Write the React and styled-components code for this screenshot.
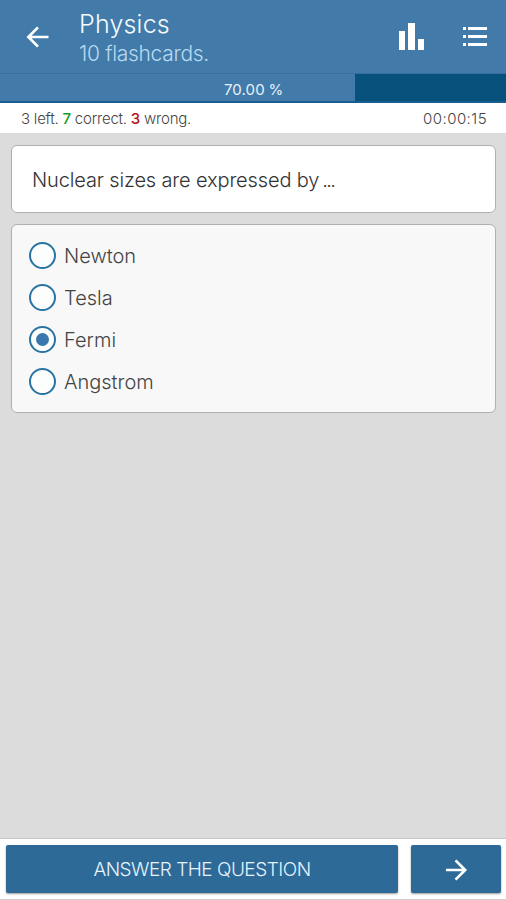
import React from "react";
import styled, { createGlobalStyle } from "styled-components";

const GlobalStyle = createGlobalStyle`
  * { box-sizing: border-box; }
  body { margin: 0; background: #dcdcdc; font-family: Inter, "Liberation Sans", sans-serif; font-weight: 300; }
`;

const Screen = styled.div`
  display: flex;
  flex-direction: column;
  height: 900px;
  background: #dcdcdc;
`;

const Toolbar = styled.header`
  display: flex;
  align-items: center;
  height: 74px;
  padding: 0 18px 0 26px;
  background: #427ba9;
  border-bottom: 1px solid #376e9c;
  color: #fff;
  svg { display: block; flex: none; }
`;

const Heading = styled.div`
  flex: 1;
  padding-left: 30px;
  margin-top: 5px;
`;

const Line = styled.div`
  white-space: nowrap;
  font-size: ${(p) => p.$size}px;
  line-height: ${(p) => p.$height}px;
  letter-spacing: ${(p) => p.$spacing || 0}px;
  color: ${(p) => p.$color};
`;

const QuestionText = styled(Line)`
  display: flex;
  gap: 3px;
`;

const Ellipsis = styled.span`
  letter-spacing: -1.6px;
`;

const Actions = styled.div`
  display: flex;
  align-items: center;
  gap: 37px;
`;

const Progress = styled.div`
  display: grid;
  grid-template-columns: 355px 1fr;
  height: 29px;
  border-bottom: 2px solid #185d90;
  background: #07527d;
`;

const ProgressFill = styled.div`
  display: flex;
  align-items: center;
  padding: 3px 0 0 224px;
  background: #427ba9;
  color: #e6f1fa;
  font-size: 15px;
  font-weight: 400;
  letter-spacing: 0.1px;
  word-spacing: -0.5px;
  white-space: nowrap;
`;

const Stats = styled.div`
  display: flex;
  justify-content: space-between;
  align-items: center;
  height: 30px;
  padding: 0 19px 0 21px;
  background: #fff;
  color: #444;
  font-size: 15px;
  letter-spacing: -0.22px;
`;

const Count = styled.span`
  font-weight: 500;
  color: ${(p) => p.$color};
`;

const Timer = styled.span`
  letter-spacing: 0.45px;
`;

const Content = styled.main`
  flex: 1;
  display: flex;
  flex-direction: column;
  gap: 11px;
  padding: 12px 10px 0 11px;
`;

const Card = styled.section`
  border: 1px solid #b0b0b0;
  border-radius: 6px;
  background: ${(p) => p.$bg};
`;

const Question = styled(Card)`
  display: flex;
  align-items: center;
  height: 68px;
  padding: 2px 20px 0 20px;
`;

const Options = styled(Card)`
  height: 189px;
  padding: 10px 17px;
`;

const Option = styled.div`
  display: flex;
  align-items: center;
  gap: 8px;
  height: 42px;
`;

const Radio = styled.span`
  display: flex;
  align-items: center;
  justify-content: center;
  flex: none;
  width: 27px;
  height: 27px;
  margin-bottom: 2px;
  border: 2px solid #2873a3;
  border-radius: 50%;
  background: #fcfdfd;
  &::after {
    content: "";
    width: 13px;
    height: 13px;
    border-radius: 50%;
    background: ${(p) => (p.$checked ? "#3878ad" : "transparent")};
  }
`;

const Footer = styled.footer`
  display: flex;
  gap: 13px;
  height: 62px;
  padding: 6px 5px 0 6px;
  border-top: 1px solid #c6c6c6;
  border-bottom: 1px solid #cfcfcf;
  background: #fff;
`;

const Button = styled.button`
  display: flex;
  align-items: center;
  justify-content: center;
  flex: ${(p) => (p.$width ? `0 0 ${p.$width}px` : "1")};
  height: 48px;
  padding: 1px 0 0;
  border: 0;
  border-radius: 2px;
  background: #2d6a97;
  box-shadow: 0 1px 2px rgba(0, 0, 0, 0.4);
  color: #fff;
  font: inherit;
  svg { display: block; }
`;

const Arrow = ({ forward }) => (
  <svg width="23" height="24" viewBox="0 0 24 24" fill="none" stroke="#fff" strokeWidth="2.8">
    {forward ? <path d="M1 12H21M11 2L21 12L11 22" /> : <path d="M23.5 12H3M12.5 2L2.5 12L12.5 22" />}
  </svg>
);

const options = ["Newton", "Tesla", "Fermi", "Angstrom"];

export default function App() {
  return (
    <>
      <GlobalStyle />
      <Screen>
        <Toolbar>
          <Arrow />
          <Heading>
            <Line $size={25} $height={29} $spacing={0.2} $color="#f4faff">Physics</Line>
            <Line $size={21} $height={29} $spacing={-0.3} $color="#b9d9f2">10 flashcards.</Line>
          </Heading>
          <Actions>
            <svg width="26" height="28" viewBox="0 0 26 28" fill="#fff">
              <path d="M0 8h6v19H0zM9 0h7v27H9zM19 16h6v11h-6z" />
            </svg>
            <svg width="26" height="22" viewBox="0 0 26 22" fill="#fff">
              <path d="M1 1h3v3H1zM6 1h19v3H6zM1 9h3v3H1zM6 9h19v3H6zM1 17h3v3H1zM6 17h19v3H6z" />
            </svg>
          </Actions>
        </Toolbar>
        <Progress>
          <ProgressFill>70.00 %</ProgressFill>
        </Progress>
        <Stats>
          <span>3 left. <Count $color="#169b2c">7</Count> correct. <Count $color="#b3141b">3</Count> wrong.</span>
          <Timer>00:00:15</Timer>
        </Stats>
        <Content>
          <Question $bg="#fff">
            <QuestionText $size={20} $height={26} $spacing={-0.14} $color="#333">
              <span>Nuclear sizes are expressed by</span>
              <Ellipsis>...</Ellipsis>
            </QuestionText>
          </Question>
          <Options $bg="#f8f8f8">
            {options.map((name) => (
              <Option key={name}>
                <Radio $checked={name === "Fermi"} />
                <Line $size={20} $height={26} $color="#444">{name}</Line>
              </Option>
            ))}
          </Options>
        </Content>
        <Footer>
          <Button>
            <Line $size={19} $height={24} $spacing={-0.5} $color="#e6f3fc">ANSWER THE QUESTION</Line>
          </Button>
          <Button $width={90}><Arrow forward /></Button>
        </Footer>
      </Screen>
    </>
  );
}
